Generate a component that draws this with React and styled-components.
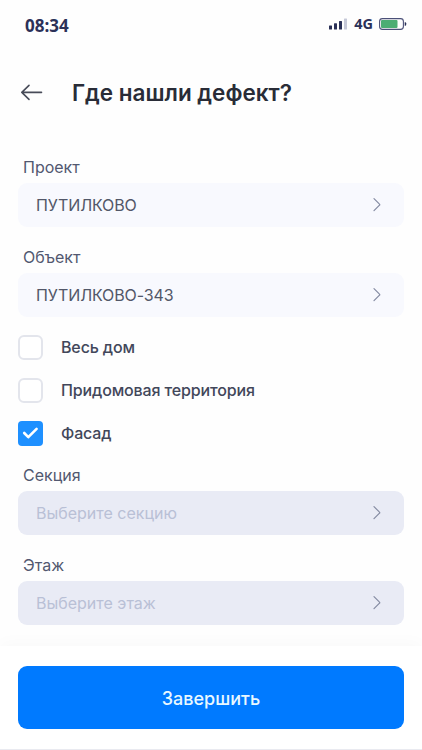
import React, { useState } from 'react'
import styled, { createGlobalStyle } from 'styled-components'

const GlobalStyle = createGlobalStyle`
  * {
    box-sizing: border-box;
  }
  body {
    margin: 0;
    background: #fefefe;
    font-family: Inter, 'Liberation Sans', sans-serif;
  }
`
const Screen = styled.div`
  display: flex;
  flex-direction: column;
  width: 422px;
  height: 750px;
  overflow: hidden;
  border-bottom: 1px solid #e9eaf0;
`
const StatusBar = styled.div`
  display: flex;
  align-items: center;
  justify-content: space-between;
  height: 50px;
  padding: 2px 15px 0 25px;
  color: #2b3158;
  font-family: 'Open Sans', 'Noto Sans', sans-serif;
  font-weight: 700;
`
const Time = styled.span`
  font-size: 17px;
  line-height: 24px;
`
const StatusIcons = styled.div`
  display: flex;
  align-items: center;
  height: 24px;
  margin-top: -4px;
`
const Network = styled.span`
  margin: 0 6px 0 6px;
  font-size: 14.5px;
  line-height: 20px;
`
const Header = styled.header`
  display: flex;
  align-items: center;
  height: 84px;
  padding-left: 20px;
`
const BackButton = styled.button`
  display: flex;
  width: 52px;
  padding: 0;
  border: 0;
  background: none;
  cursor: pointer;
`
const Title = styled.h1`
  margin: 0;
  padding-top: 1px;
  color: #292c37;
  font-size: 22.5px;
  font-weight: 600;
  line-height: 30px;
`
const Form = styled.main`
  flex: 1;
  padding: 18.5px 18px 0;
`
const Field = styled.div`
  height: 90px;
`
const Label = styled.div`
  height: 30px;
  padding-left: 5px;
  color: #525870;
  font-size: 16px;
  line-height: 28px;
`
const Select = styled.button`
  display: flex;
  align-items: center;
  justify-content: space-between;
  width: 100%;
  height: 44.5px;
  padding: 0 22px 0 18px;
  border: 0;
  border-radius: 9px;
  background: ${({ $disabled }) => ($disabled ? '#e9ebf5' : '#f8f9fe')};
  color: ${({ $disabled }) => ($disabled ? '#b9c0d6' : '#525768')};
  font-family: inherit;
  font-size: 16px;
  letter-spacing: ${({ $disabled }) => ($disabled ? '0' : '-0.12px')};
  text-align: left;
  cursor: pointer;
`
const Options = styled.div`
  display: flex;
  flex-direction: column;
  gap: 18px;
  padding: 2.5px 0 14.5px;
`
const Option = styled.label`
  display: flex;
  align-items: center;
  gap: 18px;
  height: 25px;
  color: #42475a;
  font-size: 16px;
  font-weight: 500;
  letter-spacing: -0.14px;
  cursor: pointer;
`
const OptionName = styled.span`
  padding-bottom: 2px;
`
const CheckBox = styled.button`
  display: flex;
  align-items: center;
  justify-content: center;
  width: 25px;
  height: 25px;
  padding: 0;
  border: ${({ $checked }) => ($checked ? '0' : '2px solid #e3e5ec')};
  border-radius: ${({ $checked }) => ($checked ? '4px' : '6px')};
  background: ${({ $checked }) => ($checked ? '#1e90ff' : '#fff')};
  cursor: pointer;
`
const Footer = styled.footer`
  height: 103px;
  padding: 20px 18px 0;
  background: #fff;
  box-shadow: 0 -3px 16px rgba(0, 0, 0, 0.025);
`
const SubmitButton = styled.button`
  width: 100%;
  height: 63px;
  padding: 2px 0 0;
  border: 0;
  border-radius: 9px;
  background: #007aff;
  color: #e9f8ff;
  font-family: inherit;
  font-size: 18px;
  font-weight: 500;
  cursor: pointer;
`

const Signal = () => (
  <svg width="19" height="12" viewBox="0 0 19 12" fill="#2b3158">
    <rect x="0" y="7.5" width="3" height="4" rx="0.5" />
    <rect x="5" y="5.3" width="3" height="6.2" rx="0.5" />
    <rect x="10" y="3" width="3" height="8.5" rx="0.5" />
    <rect x="15" y="0.5" width="3" height="11" rx="0.5" fill="#c6c9d8" />
  </svg>
)

const Battery = () => (
  <svg width="28" height="12" viewBox="0 0 28 12" fill="none">
    <rect x="0.6" y="0.6" width="23.8" height="10.8" rx="2.8" stroke="#4b5078" strokeWidth="1.1" />
    <rect x="2" y="2" width="16.5" height="8" rx="1" fill="#4cad73" />
    <path d="M25.7 4.2h.5q1 0 1 1v1.6q0 1-1 1h-.5z" fill="#2b3158" />
  </svg>
)

const BackArrow = () => (
  <svg width="24" height="18" viewBox="0 0 24 18" fill="none" stroke="#484c59" strokeWidth="1.6" strokeLinecap="round" strokeLinejoin="round">
    <path d="M21.5 9.4H1.8M9 2.4 1.8 9.4 9 16.4" />
  </svg>
)

const Chevron = () => (
  <svg width="10" height="16" viewBox="0 0 10 16" fill="none" stroke="#858ba2" strokeWidth="1.2" strokeLinecap="round" strokeLinejoin="round">
    <path d="M2 1.7 7.5 7.2q.6.5 0 1L2 13.7" />
  </svg>
)

const Check = () => (
  <svg width="17" height="13" viewBox="0 0 17 13" fill="none" stroke="#fff" strokeWidth="2.6" strokeLinecap="round" strokeLinejoin="round">
    <path d="M2.2 6 6.3 10.2 14.6 1.9" />
  </svg>
)

const SelectField = ({ label, value, placeholder }) => (
  <Field>
    <Label>{label}</Label>
    <Select type="button" $disabled={!value}>
      {value || placeholder}
      <Chevron />
    </Select>
  </Field>
)

const places = ['Весь дом', 'Придомовая территория', 'Фасад']

const App = () => {
  const [place, setPlace] = useState('Фасад')

  return (
    <>
      <GlobalStyle />
      <Screen>
        <StatusBar>
          <Time>08:34</Time>
          <StatusIcons>
            <Signal />
            <Network>4G</Network>
            <Battery />
          </StatusIcons>
        </StatusBar>
        <Header>
          <BackButton type="button">
            <BackArrow />
          </BackButton>
          <Title>Где нашли дефект?</Title>
        </Header>
        <Form>
          <SelectField label="Проект" value="ПУТИЛКОВО" />
          <SelectField label="Объект" value="ПУТИЛКОВО-343" />
          <Options>
            {places.map(name => (
              <Option key={name}>
                <CheckBox type="button" $checked={name === place} onClick={() => setPlace(name)}>
                  {name === place && <Check />}
                </CheckBox>
                <OptionName>{name}</OptionName>
              </Option>
            ))}
          </Options>
          <SelectField label="Секция" placeholder="Выберите секцию" />
          <SelectField label="Этаж" placeholder="Выберите этаж" />
        </Form>
        <Footer>
          <SubmitButton type="button">Завершить</SubmitButton>
        </Footer>
      </Screen>
    </>
  )
}

export default App
